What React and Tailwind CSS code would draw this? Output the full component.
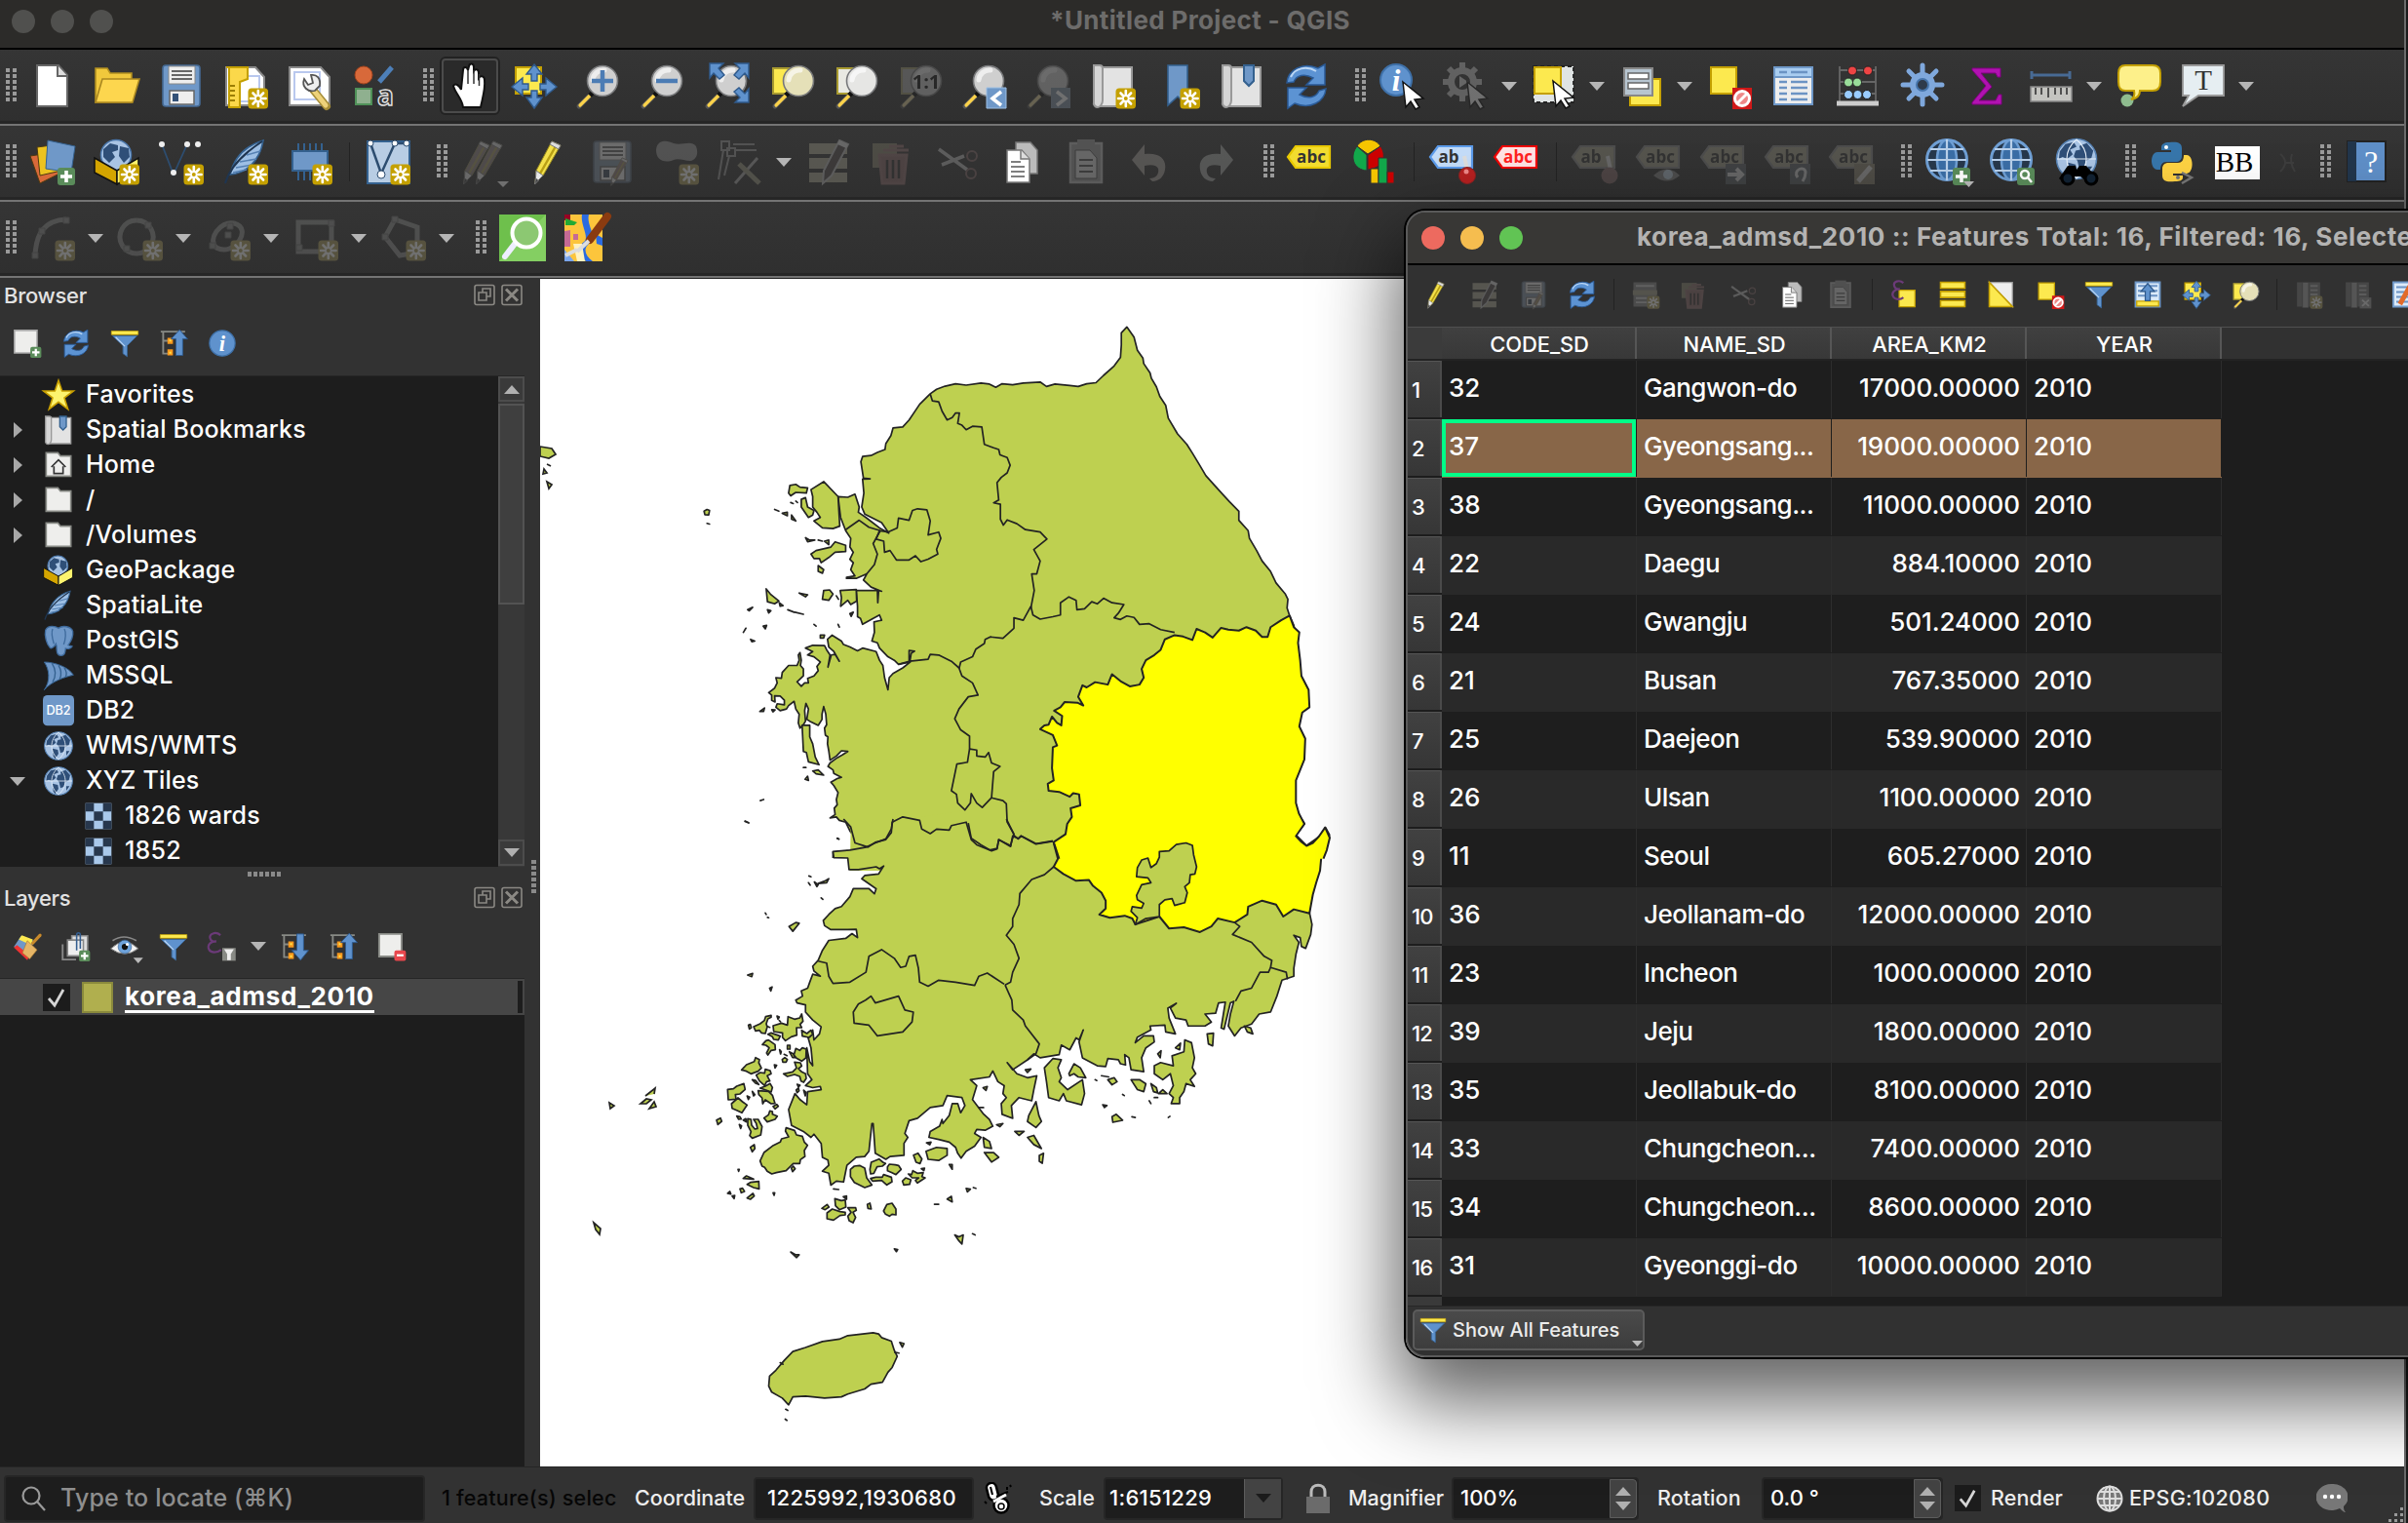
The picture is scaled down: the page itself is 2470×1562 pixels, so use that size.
import React from "react";

/* ---------- shared icon fragments (48 x 48 grid) ---------- */
const NewBadge = () => (
  <g>
    <rect x="26.500" y="26.500" width="20.500" height="21" rx="3.500" fill="#c4a000" />
    <path d="M36.800 29v16M29 37h15.600M31.500 31.500l10.600 11M42.100 31.500l-10.600 11" stroke="#fff" strokeWidth="2.600" strokeLinecap="round" />
    <circle cx="36.800" cy="37" r="2" fill="#c4a000" />
  </g>
);
const PlusBadge = () => (
  <g>
    <rect x="29" y="30" width="18" height="18" rx="3" fill="#5a8c5a" />
    <path d="M38 33v12M32 39h12" stroke="#fff" strokeWidth="3.600" />
  </g>
);
const Magnifier = ({ cx = 28, glass = "#cfcfcf" }) => (
  <g>
    <path d={`M${cx - 9} 30L${cx - 24} 45`} stroke="#555" strokeWidth="5" strokeLinecap="round" />
    <path d={`M${cx - 13} 34L${cx - 23} 44`} stroke="#fcd34a" strokeWidth="3.200" strokeLinecap="round" />
    <path d={`M${cx - 9} 30L${cx - 13} 34`} stroke="#111" strokeWidth="5" />
    <circle cx={cx} cy="19" r="15.500" fill={glass} stroke="#77787a" strokeWidth="1.600" />
    <path d={`M${cx - 10} 18a11 11 0 0 1 12-10`} stroke="#fff" strokeWidth="5" fill="none" opacity=".65" strokeLinecap="round" />
  </g>
);
const Cursor = ({ x = 0, y = 0 }) => (
  <path transform={`translate(${x} ${y})`} d="M23 20L44 37l-9 1 5 8-4 2-5-8-5 6z" fill="#fff" stroke="#111" strokeWidth="1.500" />
);
const Pencil = ({ x = 0, c = "#f3e04b" }) => (
  <g transform={`translate(${x} 0)`} stroke="#777" strokeWidth="1">
    <path d="M31 3l9 4L22 38l-8 8 1-13z" fill={c} stroke="#998a20" />
    <path d="M35 8L19 36" stroke="#b89f15" strokeWidth="2.500" />
    <path d="M31 3l9 4-2 4-9-5z" fill="#ddd" />
    <path d="M15 33l7 5-8 8z" fill="#e8e8e8" />
    <path d="M14.500 41l3 2-4 4z" fill="#444" />
  </g>
);
const Disk = () => (
  <g>
    <rect x="5" y="3" width="38" height="42" rx="3" fill="#6f98c8" stroke="#456a94" strokeWidth="1.600" />
    <path d="M11 4h27v18H11z" fill="#eee" stroke="#888" />
    <path d="M14 9h21M14 13h21M14 17h21" stroke="#666" strokeWidth="1.800" />
    <path d="M12 29h25v14H12z" fill="#eee" stroke="#666" strokeWidth="1.500" />
    <path d="M15 32h6v8h-6z" fill="#345278" />
  </g>
);
const ZoomSheet = ({ c }) => <path d="M5 6h20v26H5z" fill={c} stroke="#a89a30" strokeWidth="2" />;
const Trash = () => (
  <g>
    <path d="M3 5h25v25H3z" fill="#8f854f" />
    <path d="M14 12h26M20 8h15M10 17h28l-3 29H13z" fill="#b05c5c" stroke="#b86464" strokeWidth="3" />
    <path d="M18 22v19M24 22v19M30 22v19" stroke="#333" strokeWidth="2.500" />
  </g>
);
const Marble = ({ cx = 24, cy = 24, r = 22 }) => (
  <g transform={`translate(${cx} ${cy}) scale(${r / 22})`}>
    <circle r="21.500" fill="#a9c4e4" stroke="#5580b2" strokeWidth="1.600" />
    <path d="M-18-8l6-8 9-2 3 5-7 3 3 5-6 5-5-2-4 2zM-9 4l8 2 1 6-5 8-3-4zM3-14l8-3 7 8-2 8-6 3-2 7-5 2-2-9-4-5 2-6 5-1zM12 8l5 0-5 7z" fill="#2f4f78" />
    <path d="M-21 0h42M0-21c-14 12-14 30 0 42 14-12 14-30 0-42" stroke="#e8f1fb" strokeWidth="1.200" fill="none" />
  </g>
);
const NetGlobe = () => (
  <g fill="none" stroke="#6f9fd4">
    <circle cx="23" cy="22" r="20.500" fill="#27384c" strokeWidth="3" />
    <ellipse cx="23" cy="22" rx="10" ry="20.500" fill="#3b6ea6" strokeWidth="2.600" />
    <path d="M23 1v42M3 22h40M6 11h34M6 33h34" stroke="#b9d0ea" strokeWidth="2.200" />
  </g>
);
const Label = ({ fill, edge, text = "#333", x = 25, children = "abc" }) => (
  <g>
    <path d="M1 19L9 8h35v22H9z" fill={fill} stroke={edge} strokeWidth="2.200" />
    <text x={x} y="25" textAnchor="middle" fontSize="17" fontWeight="700" fill={text} className="font-['Open_Sans',sans-serif]">{children}</text>
  </g>
);
const Package = () => (
  <g>
    <circle cx="23" cy="17" r="15.500" fill="#a9c4e4" stroke="#4a76aa" strokeWidth="1.600" />
    <path d="M10 11l7-6 8 2 0 5-6 2 3 5-6 6-6-6zM27 8l9 2 1 9-6 6-5-7z" fill="#2f4f78" />
    <path d="M1 20l23 13v14L1 35z" fill="#d4a500" stroke="#111" strokeWidth="1.500" />
    <path d="M24 33l22-13v15L24 47z" fill="#fdf36e" stroke="#111" strokeWidth="1.500" />
  </g>
);
const Feather = () => (
  <g>
    <path d="M42 2C22 8 12 20 8 37c14-1 30-11 34-35z" fill="#9dbfe4" stroke="#34618f" strokeWidth="1.600" />
    <path d="M41 3C24 14 8 28 3 46" stroke="#1f3550" strokeWidth="2" fill="none" />
    <path d="M14 30l17-3M18 24l17-3M25 17l14-4M11 35l14-3" stroke="#5580b2" strokeWidth="1.600" />
  </g>
);
const GearShape = ({ c, hole, r = 12 }) => (
  <g>
    <circle cx="24" cy="23" r={r + 1} fill={c} />
    <path d="M24 3v40M4 23h40M10 9l28 28M38 9L10 37" stroke={c} strokeWidth="5" strokeLinecap="round" />
    <circle cx="24" cy="23" r={r - 6} fill={hole} stroke="#4674aa" strokeWidth="2" />
  </g>
);
const Star = () => <path d="M24 2l5.500 16H47L33 28.500 38.500 46 24 35 9.500 46 15 28.500 1 18h17.500z" fill="#fdf36e" stroke="#c9a000" strokeWidth="2.400" />;
const Folder = () => <path d="M5 5h18l4 5h16v31H5z" fill="#eeeeec" stroke="#888a85" strokeWidth="2.500" />;
const MapRoll = () => (
  <g>
    <path d="M10 5h33v40H10z" fill="#e3e3e3" stroke="#999" strokeWidth="2" />
    <path d="M4 3h6c3 0 3 3 3 3v33c0 4-3 7-5 7s-5-2-4-6z" fill="#d5d5d5" stroke="#999" strokeWidth="2" />
  </g>
);
const Tree = ({ up }) => (
  <g>
    <path d="M3 5h40M7 5v36h10M7 20h8" stroke="#888a85" strokeWidth="3" fill="none" />
    <path d="M14 15h9v10h-9zM14 34h9v10h-9z" fill="#f8981d" />
    <path d="M17 18h3v3h-3zM17 38h3v3h-3z" fill="#fce94f" />
    <path d={up ? "M34 2l13 15h-8v27H28V17h-8z" : "M34 46l13-16h-8V3H28v27h-8z"} fill="#5f92cd" stroke="#2f5a8c" strokeWidth="1.600" />
  </g>
);
const Node = ({ x, y }) => <path d={`M${x - 3} ${y - 3}h6v6h-6z`} fill="#8b8f8b" stroke="#6a6d6a" />;
const Shape = ({ d, nodes }) => (
  <g>
    <path d={d} fill="none" stroke="#8d908d" strokeWidth="5" />
    {nodes.map(([x, y], i) => <Node key={i} x={x} y={y} />)}
    <NewBadge />
  </g>
);

const ICONS = {
  newFile: <g><path d="M8 3h22l9 10v32H8z" fill="#fff" stroke="#666" strokeWidth="2" /><path d="M29 3v11h10" fill="#ddd" stroke="#666" strokeWidth="2" /></g>,
  open: <g><path d="M2 6h12l3 5h22v30H2z" fill="#f0c83c" stroke="#b08e20" strokeWidth="1.600" /><path d="M9 17h38l-7 24H2z" fill="#fdd64e" stroke="#a98720" strokeWidth="1.600" /></g>,
  save: <Disk />,
  newLayout: <g><path d="M4 5h30l9 10v29H4z" fill="#fff" stroke="#888" strokeWidth="2" /><path d="M16 14h22v26H16z" fill="none" stroke="#b9c8ee" strokeWidth="2" /><path d="M4 5h22v12l-8 3v26H7V5z" fill="#fbd84a" stroke="#c4a000" strokeWidth="2" /><path d="M8 24h5M8 29h5M8 34h5M8 39h5" stroke="#9c7e00" strokeWidth="2" /><NewBadge /></g>,
  layoutManager: <g><path d="M3 5h32l9 10v29H3z" fill="#fff" stroke="#888" strokeWidth="2" /><path d="M8 10h26v28H8z" fill="none" stroke="#b9c8ee" strokeWidth="2" /><path d="M27 28L41 45" stroke="#a68d38" strokeWidth="8" strokeLinecap="round" /><path d="M28 29L40 44" stroke="#eed27a" strokeWidth="5" strokeLinecap="round" /><path d="M18 17c-3 8 4 14 11 12l5-5c1-8-3-12-9-11l2 8-5 2z" fill="#eee" stroke="#555" strokeWidth="1.800" /></g>,
  style: <g><circle cx="13" cy="13" r="9" fill="#d8693a" stroke="#a4441d" /><path d="M42 5L29 20" stroke="#4d7fb8" strokeWidth="5" /><path d="M5 27h16v16H5z" fill="#8fb08f" stroke="#4f9158" strokeWidth="2" /><text x="27" y="44" fontSize="28" fontWeight="700" fill="#333" stroke="#ddd" strokeWidth="1.500" className="font-['Open_Sans',sans-serif]">a</text></g>,
  hand: <path d="M17 46c-1-9-8-14-10-22 2-3 6-1 8 4L17 8c0-4 4-4 5 0l1-4c1-4 5-3 5 1v4c2-3 5-2 5 2v5c2-3 6-2 6 2 1 10-2 18-4 28z" fill="#fff" stroke="#111" strokeWidth="2" />,
  handLines: <path d="M22 8v14M28 8v14M33.500 12v12" stroke="#333" strokeWidth="1.500" />,
  panSel: <g><path d="M5 5h26v27H5z" fill="#fce94f" stroke="#c4a000" strokeWidth="2" /><path d="M24 2l8 10h-5v7h-6v-7h-5zM24 47l8-11h-5v-7h-6v7h-5zM1 25l11-9v6h6v6h-6v6zM47 25l-11-9v6h-6v6h6v6z" fill="#5f92cd" stroke="#2f5a8c" strokeWidth="1.400" /></g>,
  zoomIn: <g><Magnifier /><path d="M28 8v22M17 19h22" stroke="#4c7cb4" strokeWidth="4.500" /></g>,
  zoomOut: <g><Magnifier /><path d="M17 19h22" stroke="#4c7cb4" strokeWidth="4.500" /></g>,
  zoomFull: <g><Magnifier /><path d="M6 1h14l-5 5 6 7-5 4-6-6-4 5zM46 1H32l5 5-6 7 5 4 6-6 4 5zM46 41H32l5-5-6-6 5-4 6 6 4-5z" fill="#5f92cd" stroke="#2f5a8c" strokeWidth="1.400" /></g>,
  zoomSel: <g><ZoomSheet c="#fce94f" /><Magnifier cx={31} glass="#e5e0b8" /></g>,
  zoomLayer: <g><ZoomSheet c="#e9e9e2" /><Magnifier cx={30} glass="#e6e6e4" /></g>,
  zoomNative: <g><ZoomSheet c="#aaa" /><Magnifier cx={30} glass="#ccc" /><text x="30" y="27" textAnchor="middle" fontSize="20" fontWeight="700" fill="#111" className="font-['Open_Sans',sans-serif]">1:1</text></g>,
  zoomLast: <g><Magnifier /><path d="M26 26h20v21H26z" fill="#6f98c8" stroke="#9dbfe4" /><path d="M41 30l-9 7 9 7" stroke="#fff" strokeWidth="3.500" fill="none" /></g>,
  zoomNext: <g><Magnifier /><path d="M26 26h20v21H26z" fill="#6f98c8" /><path d="M32 30l9 7-9 7" stroke="#fff" strokeWidth="3.500" fill="none" /></g>,
  newMap: <g><MapRoll /><NewBadge /></g>,
  newBookmark: <g><path d="M14 3h20v41l-10-9L14 44z" fill="#6f98c8" stroke="#34618f" strokeWidth="1.600" /><NewBadge /></g>,
  bookmarks: <g><MapRoll /><path d="M26 3h10v16l-5 5-5-5z" fill="#6f98c8" stroke="#34618f" strokeWidth="2" /></g>,
  refresh: <g fill="#5c93d3" stroke="#2a5a96" strokeWidth="1.500"><path d="M4 21C5 8 20-1 36 6l7-4v21H24l7-7c-9-5-17-3-20 4z" /><path d="M44 27C43 40 28 49 12 42l-7 5V26h19l-7 7c9 5 17 3 20-4z" /><path d="M8 15C12 6 24 3 34 9" stroke="#bcd7f5" strokeWidth="2" fill="none" /></g>,
  info: <g><circle cx="24" cy="24" r="21" fill="#5f92cd" stroke="#3e70a8" strokeWidth="2" /><text x="24" y="37" textAnchor="middle" fontSize="36" fontStyle="italic" fontWeight="700" fill="#fff" className="font-['Liberation_Serif',serif]">i</text></g>,
  identify: <g><circle cx="18" cy="18" r="16" fill="#5f92cd" stroke="#3e70a8" strokeWidth="2" /><text x="18" y="29" textAnchor="middle" fontSize="31" fontStyle="italic" fontWeight="700" fill="#fff" className="font-['Liberation_Serif',serif]">i</text><Cursor x={2} /></g>,
  action: <g><g transform="translate(-2 -3)" fill="none"><circle cx="22" cy="23" r="11.500" stroke="#ccc" strokeWidth="7" /><path d="M22 3v6M22 37v6M2 23h6M36 23h6M8 9l4 4M36 9l-4 4M8 37l4-4M36 37l-4-4" stroke="#ccc" strokeWidth="6" /></g><path d="M17 14l9 6-9 6z" fill="#ddd" /><Cursor x={2} /></g>,
  select: <g><path d="M3 4h41v37H3z" fill="#e0e4e4" stroke="#222" strokeDasharray="4 3" strokeWidth="1.800" /><path d="M4 5h27v27H4z" fill="#fce94f" stroke="#c4a000" strokeWidth="2" /><Cursor x={0} y={-1} /></g>,
  selectForm: <g><path d="M12 17h31v27H12z" fill="#fce94f" stroke="#c4a000" strokeWidth="2" /><path d="M6 6h29v28H6z" fill="#b7c5d0" stroke="#888" strokeWidth="2" /><path d="M10 11h21v6H10zM10 21h21v6H10z" fill="#fff" stroke="#666" strokeWidth="1.500" /></g>,
  deselect: <g><path d="M5 5h26v27H5z" fill="#fce94f" stroke="#c4a000" strokeWidth="2" /><path d="M27 26h20v22H27z" fill="#d01818" /><circle cx="37" cy="37" r="7.500" fill="#e88" stroke="#fff" strokeWidth="3" /><path d="M32 42l10-10" stroke="#fff" strokeWidth="3" /></g>,
  table: <g><path d="M4 5h39v38H4z" fill="#eee" stroke="#6f98c8" strokeWidth="2" /><path d="M4 5h39v10H4z" fill="#a9cdf0" stroke="#6f98c8" strokeWidth="2" /><path d="M9 10h8M21 10h17M9 20h8M21 20h17M9 26h8M21 26h17M9 32h8M21 32h17M9 38h8M21 38h17" stroke="#6b93c4" strokeWidth="2.400" /></g>,
  abacus: <g><path d="M5 4v38M42 4v38M5 8h37M5 20h37M5 32h37" stroke="#666" strokeWidth="1.800" /><g stroke="#222"><circle cx="18" cy="8.500" r="4.500" fill="#e44" /><circle cx="34" cy="8.500" r="4.500" fill="#e44" /><circle cx="14" cy="20.500" r="4.500" fill="#9d9" /><circle cx="23" cy="20.500" r="4.500" fill="#9d9" /><circle cx="14" cy="33" r="4.500" fill="#9cf" /><circle cx="23.500" cy="33" r="4.500" fill="#9cf" /><circle cx="33" cy="33" r="4.500" fill="#9cf" /></g><path d="M2 42h43" stroke="#ccc" strokeWidth="5" /></g>,
  gear: <GearShape c="#7fa8dc" hole="#2e3a4a" />,
  sigma: <path d="M9 6h29v9h-3l-2-4H18l11 14-13 14h17l3-6h3v10H9v-2l14-17L9 8z" fill="#b012b0" stroke="#800080" />,
  measure: <g><path d="M4 9v8M43 9v8M4 13h39" stroke="#486a94" strokeWidth="3" /><path d="M3 25h42v15H3z" fill="#c4c4c0" stroke="#888" strokeWidth="1.500" /><path d="M8 26v7M14 26v7M21 26v10M28 26v7M34 26v7M40 26v7" stroke="#444" strokeWidth="1.800" /></g>,
  tips: <g><circle cx="12" cy="39" r="6.500" fill="#8fbc8f" /><path d="M10 3h28q8 0 8 8v9q0 9-8 9H25c0 5-3 8-9 9 3-2 4-5 3-9h-9q-7 0-7-9v-9q0-8 7-8z" fill="#fdf08a" stroke="#c4a000" strokeWidth="2" /></g>,
  annotation: <g><path d="M3 3h42v31H19L3 45l6-11H3z" fill="#e6eef2" stroke="#999" strokeWidth="1.800" /><text x="24" y="28" textAnchor="middle" fontSize="29" fill="#333" className="font-['Liberation_Serif',serif]">T</text></g>,
  addLayer: <g stroke="#4d3a10" strokeWidth="1"><path d="M1 18l26-4 4 22L11 46z" fill="#d8693a" /><path d="M8 9l22-3 3 27-22 5z" fill="#edc320" /><path d="M19 2l28 6-4 27-26-4z" fill="#6f98c8" stroke="#34618f" /><g stroke="none"><PlusBadge /></g></g>,
  geopackage: <g><Package /><NewBadge /></g>,
  shapefile: <g><path d="M4 6l12 31L30 6" stroke="#2d4d70" strokeWidth="1.800" fill="none" /><circle cx="4" cy="6" r="3" fill="#eee" /><circle cx="30" cy="6" r="3" fill="#eee" /><circle cx="41" cy="6" r="3" fill="#eee" /><circle cx="16" cy="35" r="3" fill="#eee" /><NewBadge /></g>,
  feather: <Feather />,
  spatialite: <g><Feather /><NewBadge /></g>,
  memory: <g><path d="M12 5v38M18 5v38M24 5v38M30 5v38M36 5v38" stroke="#34618f" strokeWidth="2" /><path d="M6 13h36v20H6z" fill="#6f98c8" stroke="#34618f" strokeWidth="2" /><NewBadge /></g>,
  virtual: <g><path d="M3 3h43v43H3z" fill="#b8cde4" stroke="#34618f" strokeWidth="2" /><path d="M6 5l11 31L31 5M31 5h12" stroke="#2d4d70" strokeWidth="2.500" fill="none" /><circle cx="6" cy="5" r="3" fill="#fff" stroke="#2d4d70" /><circle cx="31" cy="5" r="3" fill="#fff" stroke="#2d4d70" /><circle cx="43" cy="5" r="3" fill="#fff" stroke="#2d4d70" /><circle cx="17" cy="37" r="4" fill="#fff" stroke="#2d4d70" /><NewBadge /></g>,
  edits: <g><Pencil x={-10} c="#a08080" /><Pencil x={3} c="#a08080" /><path d="M38 44h12l-6 6z" fill="#fff" /></g>,
  pencil: <Pencil x={-3} />,
  saveEdits: <g><Disk /><g transform="translate(14 18) scale(.65)"><Pencil c="#a77" /></g></g>,
  addFeature: <g><path d="M3 12c1-12 12-10 18-7 8 3 18-4 23 3 3 8 0 14-6 15-6 0-12-3-17-1-10 4-18 0-18-10z" fill="#999" /><NewBadge /></g>,
  vertex: <g stroke="#999" strokeWidth="3" fill="none"><path d="M4 3h8v9H4zM10 10h8v8h-8zM16 6h22M18 12h22M6 12L1 42M12 18L7 38" strokeWidth="2" /><path d="M41 20L18 46" stroke="#aaa" /><path d="M22 26l21 20" stroke="#a0985f" strokeWidth="5" /></g>,
  multiEdit: <g><path d="M4 5h39v11H4zM4 20h39v11H4zM4 35h39v10H4z" fill="#b3ab78" /><g transform="translate(2 0)"><path d="M33 2l9 4L25 38l-9 8 1-13z" fill="#5c4a4a" stroke="#bbb" strokeWidth="2" /><path d="M33 2l9 4-2 4-9-4z" fill="#ddd" /></g></g>,
  trash: <Trash />,
  cut: <g fill="none" strokeWidth="2"><path d="M5 11l29 21M8 27l23-9" stroke="#bbb" strokeWidth="3.500" /><circle cx="39" cy="18" r="5" stroke="#a06060" /><circle cx="38" cy="36" r="5" stroke="#a06060" /></g>,
  copy: <g stroke="#777" strokeWidth="1.500"><path d="M18 4h15l7 8v24H18z" fill="#bbb" /><path d="M9 12h15l8 9v24H9z" fill="#fff" /><path d="M23 12v9h9" fill="#ddd" /><path d="M13 24h10M13 29h14M13 34h14M13 39h14" stroke="#555" /></g>,
  paste: <g><path d="M8 5h32v40H8z" fill="#999" stroke="#bbb" strokeWidth="2.500" /><path d="M13 12h15l7 8v21H13z" fill="#ddd" stroke="#555" /><path d="M15 1h18v9H15z" fill="#999" /><path d="M17 22h14M17 28h14M17 34h14" stroke="#555" strokeWidth="2" /></g>,
  undo: <path d="M5 22L18 6v10c15-2 23 5 21 16-1 7-6 12-13 12l-3-3c8 0 10-6 9-10-1-3-6-5-14-3v10z" fill="#b0a094" />,
  redo: <path d="M43 22L30 6v10C15 14 7 21 9 32c1 7 6 12 13 12l3-3c-8 0-10-6-9-10 1-3 6-5 14-3v10z" fill="#a5aba5" />,
  label: <Label fill="#f2dc2f" edge="#e8c800" />,
  diagram: <g stroke="#333" strokeWidth="1"><path d="M17 16L6 8C11-1 25-1 30 8z" fill="#f6c500" /><path d="M16 17L6 8c-8 10-4 24 10 25z" fill="#12a84b" /><path d="M17 17L30 8c6 8 5 22-13 24z" fill="#c00" /><path d="M20 31h8v15h-8z" fill="#f6c500" /><path d="M28 20h9v26h-9z" fill="#12a84b" /><path d="M37 34h7v12h-7z" fill="#c00" /></g>,
  pinLabel: <g><Label fill="#c4dcf8" edge="#5c9bea" x={20}>ab</Label><path d="M36 18l3 14" stroke="#ddd" strokeWidth="4" /><circle cx="39" cy="38" r="8.500" fill="#b52020" stroke="#822" /><circle cx="38" cy="34" r="2.500" fill="#e88" /></g>,
  redLabel: <Label fill="#ffe3e3" edge="#e00" text="#f22" />,
  labPin: <g><Label fill="#aaa36a" edge="#888" x={20}>ab</Label><path d="M37 18l3 14" stroke="#ddd" strokeWidth="4" /><circle cx="39" cy="38" r="8.500" fill="#a66" /></g>,
  labEye: <g><Label fill="#aaa36a" edge="#888" /><path d="M18 38q14-13 27 0-13 11-27 0z" fill="#888" /><circle cx="33" cy="37" r="5" fill="#adf" /></g>,
  labMove: <g><Label fill="#aaa36a" edge="#888" /><path d="M26 26h21v21H26z" fill="#567" /><path d="M28 37h14M37 31l6 6-6 6" stroke="#ddd" strokeWidth="4" fill="none" /></g>,
  labRotate: <g><Label fill="#aaa36a" edge="#888" /><path d="M26 26h21v21H26z" fill="#567" /><path d="M34 40c-6-8 8-13 8-5 0 4-1 6-3 9" stroke="#ddd" strokeWidth="3" fill="none" /></g>,
  labEdit: <g><Label fill="#aaa36a" edge="#888" /><path d="M26 26h21v21H26z" fill="#985" /><path d="M43 29L30 44" stroke="#ddd" strokeWidth="5" /></g>,
  webAdd: <g><NetGlobe /><PlusBadge /><path d="M40 44h11l-5.500 6z" fill="#bbb" /></g>,
  webFind: <g><NetGlobe /><rect x="29" y="30" width="18" height="18" rx="3" fill="#5a8c5a" /><circle cx="37" cy="37" r="4" fill="none" stroke="#fff" strokeWidth="2.500" /><path d="M40 40l4 5" stroke="#fff" strokeWidth="2.500" /></g>,
  metaSearch: <g><Marble cx={24} cy={21} r={21} /><path d="M15 28h8l1 4 3-4h7l12 14-8 5-10-8h-7l-8 8-7-6z" fill="#000" /><circle cx="15" cy="41" r="6" fill="#123" stroke="#000" strokeWidth="3" /><circle cx="39" cy="41" r="6" fill="#123" stroke="#000" strokeWidth="3" /></g>,
  python: <g><path d="M21 4c8-1 13 0 13 6v8c0 4-3 6-6 6H18c-4 0-6 3-6 8H9C1 32 1 14 9 14h14v-2H13V9c0-3 3-5 8-5z" fill="#3776ab" /><path d="M27 44c-8 1-13 0-13-6v-7c0-4 3-6 6-6h10c4 0 6-3 6-8h3c7 0 8 18 0 19H25v2h10v2c0 3-3 4-8 4z" fill="#ffd343" /><circle cx="18" cy="9" r="2" fill="#fff" /><circle cx="30" cy="40" r="2" fill="#777" /><path d="M34 35l10 5-10 6" stroke="#777" strokeWidth="2.500" fill="none" /></g>,
  bb: <g transform="translate(1 0)"><path d="M1 8h46v34H1z" fill="#fff" /><text x="21" y="34" textAnchor="middle" fontSize="29" fill="#000" className="font-['Liberation_Serif',serif]">BB</text></g>,
  ghost: <path d="M18 16q10 8 0 18M22 25h10M30 16q-3 8 3 18" stroke="#3d3d3d" strokeWidth="2" fill="none" />,
  help: <g><path d="M4 3h39v41H4z" fill="#5f8fc8" stroke="#222" strokeWidth="2" /><path d="M4 3h9v41H4z" fill="#22364c" /><text x="28" y="35" textAnchor="middle" fontSize="32" fill="#fff" className="font-['Liberation_Serif',serif]">?</text></g>,
  arc: <Shape d="M6 42C7 20 15 6 38 5" nodes={[[6, 42], [13, 17], [38, 6]]} />,
  circle: <Shape d="M20 6a17 17 0 1 0 .1 0" nodes={[[32, 11], [10, 35]]} />,
  ellipse: <Shape d="M30 9C50 14 30 44 12 34 2 26 16 6 30 9" nodes={[[8, 32], [24, 21], [26, 12]]} />,
  rect: <Shape d="M6 8h34v30H6z" nodes={[[40, 9], [7, 34]]} />,
  poly: <Shape d="M15 5L38 13v26L20 42 5 23z" nodes={[[15, 5], [5, 23]]} />,
  quickSearch: <g><path d="M0 0h48v48H0z" fill="#6ec04c" /><path d="M0 48L48 0v48z" fill="#84cf62" /><path d="M16 30L6 43" stroke="#eef" strokeWidth="6" strokeLinecap="round" /><circle cx="28" cy="19" r="14.500" fill="#8cc872" stroke="#fff" strokeWidth="4" /></g>,
  paintMap: <g><path d="M1 0h39v48H1z" fill="#fcc53c" /><path d="M1 0h6v6H1z" fill="#902" /><path d="M2 4l12 4-3 3-9 0z" fill="#2a3" /><path d="M1 17l6-1v17H1zM10 20h5v6h-5z" fill="#c56a94" /><path d="M19 0h7c-3 12 10 22 0 30-6 5-4 12 4 18h-7c-8-7-9-15-2-20 6-5-4-17-2-28zM33 20l7 4v8l-6-2z" fill="#2b6be0" /><path d="M10 30h9l3 18H14z" fill="#fff2c0" /><path d="M1 36l10 12H1z" fill="#7aa6ee" /><path d="M45 2L27 26" stroke="#8a3b10" strokeWidth="8" strokeLinecap="round" /><path d="M26 27L14 38M14 36L2 42" stroke="#ddd" strokeWidth="4" /></g>,
  filter: <g><path d="M2 4h44v6H2z" fill="#fce94f" stroke="#c4a000" /><path d="M4 12h40L28 28v18l-7-5V28z" fill="#5f92cd" stroke="#3a6698" strokeWidth="1.500" /><path d="M9 14l15 15" stroke="#bcd7f5" strokeWidth="2" /></g>,
  addSheet: <g><path d="M3 3h37v37H3z" fill="#eeeeec" stroke="#aaa" strokeWidth="2.500" /><PlusBadge /></g>,
  delSheet: <g><path d="M3 3h37v37H3z" fill="#eeeeec" stroke="#888a85" strokeWidth="3" /><rect x="28" y="30" width="19" height="17" rx="3" fill="#e8474d" /><path d="M32 38h11" stroke="#fff" strokeWidth="3.500" /></g>,
  treeUp: <Tree up />, treeDown: <Tree />,
  star: <Star />, folder: <Folder />,
  home: <g><Folder /><path d="M13 27l11-11 11 11M17 26v11h14V26" fill="none" stroke="#333" strokeWidth="2.500" /></g>,
  package: <Package />,
  elephant: <g fill="#6f98c8" stroke="#3e6a9c" strokeWidth="2"><path d="M4 8C8-1 20 2 24 5c6-5 20-3 22 5 1 8-4 17-7 21l6 2c-2 4-8 4-10 3-1 8-2 11-7 11s-7-3-7-15l-1-3c-2 4-6 8-9 6C6 30 2 17 4 8z" /><path d="M15 6c-3 7 0 16 2 23M33 6c3 5 2 16-1 24" fill="none" /></g>,
  mssql: <g><path d="M2 3c16 0 38 8 45 20C34 26 14 32 2 46 12 32 10 14 2 3z" fill="#6f98c8" stroke="#34618f" strokeWidth="1.500" /><path d="M14 5c6 9 6 20 1 29M24 8c5 8 5 14 2 21M33 12c4 6 4 10 2 14" stroke="#34618f" strokeWidth="2" fill="none" /></g>,
  db2: <g><rect y="0" width="48" height="47" rx="7" fill="#6f98c8" /><text x="24" y="30" textAnchor="middle" fontSize="19" fill="#fff" className="font-['Inter',sans-serif]">DB2</text></g>,
  world: <Marble />,
  tile: <g><path d="M4 4h40v40H4z" fill="#a9c8ea" /><path d="M4 4h13v13H4zM31 4h13v13H31zM17 17h14v14H17zM4 31h13v13H4zM31 31h13v13H31z" fill="#27374d" /></g>,
  brush: <g><path d="M2 24L14 6l20 8-8 30z" fill="#6f98c8" /><path d="M10 12l5-7 18 7-3 9z" fill="#fce94f" /><path d="M2 25l5-4 21 17-4 8z" fill="#e33" /><path d="M45 5L33 18" stroke="#c98a2c" strokeWidth="5" strokeLinecap="round" /><path d="M24 14l16 15-12 15-12-10z" fill="#e6b566" stroke="#a9762a" /></g>,
  group: <g><path d="M2 20v25h22" fill="none" stroke="#888" strokeWidth="3" /><path d="M17 6h26v26H17z" fill="#ddd" stroke="#888" strokeWidth="2.500" /><path d="M10 13h26v26H10z" fill="#eee" stroke="#888" strokeWidth="2.500" /><path d="M25 30V5c0-5 6-5 6 0v22" fill="none" stroke="#345e90" strokeWidth="2.500" /><PlusBadge /></g>,
  eye: <g><path d="M4 14Q22 2 43 14" stroke="#888" strokeWidth="2.500" fill="none" /><path d="M1 27Q24 5 46 27 24 44 1 27z" fill="#f4f4f4" stroke="#777" strokeWidth="1.500" /><circle cx="24" cy="24" r="11" fill="#6ea3dc" stroke="#345e90" /><circle cx="24" cy="24" r="5" fill="#111" /><circle cx="28" cy="20" r="2.500" fill="#fff" /><path d="M38 42h16l-8 9z" fill="#bbb" /></g>,
  epsFilter: <g><path d="M21 5C13-2 2 3 4 10c1 5 6 6 10 5C5 15-1 21 2 28c3 7 14 6 20 1" fill="none" stroke="#6b3a78" strokeWidth="3.500" /><path d="M24 26h22v21H24z" fill="#888a85" /><path d="M27 28h16l-5 8v10h-6V36z" fill="#eee" /></g>,
  epsSel: <g><path d="M16 17h26v27H16z" fill="#fce94f" stroke="#c4a000" strokeWidth="2" /><path d="M23 5C16-1 6 3 8 10c1 4 5 6 9 5C9 15 3 21 6 27c3 6 12 6 17 2" fill="none" stroke="#6b3a78" strokeWidth="3.500" /></g>,
  selAll: <path d="M4 4h40v10H4zM4 19h40v10H4zM4 34h40v10H4z" fill="#fce94f" stroke="#c4a000" strokeWidth="2.500" />,
  invert: <g><path d="M4 4h38v40z" fill="#eee" stroke="#999" strokeWidth="2" /><path d="M4 4l38 40H4z" fill="#fce94f" stroke="#c4a000" strokeWidth="2.500" /></g>,
  moveTop: <g><path d="M4 4h40v40H4z" fill="#dcebfa" stroke="#6f98c8" strokeWidth="3" /><path d="M8 10h32M8 18h32M8 26h32" stroke="#6b93c4" strokeWidth="3" /><path d="M6 35h36v8H6z" fill="#fce94f" stroke="#c4a000" strokeWidth="2" /><path d="M24 6l11 13h-7v15h-8V19h-7z" fill="#5f92cd" stroke="#2f5a8c" strokeWidth="2" /></g>,
  addRow: <g><path d="M4 4h38v40H4z" fill="#888" /><path d="M8 10h30M8 30h18M8 37h18" stroke="#ccc" strokeWidth="3" /><path d="M3 17h40v8H3z" fill="#aaa36a" /><NewBadge /></g>,
  newField: <g><path d="M5 4h38v40H5z" fill="#777" /><path d="M14 4h10v42H14z" fill="#aaa" stroke="#444" /><path d="M27 10h12M27 17h12M27 24h12" stroke="#bbb" strokeWidth="3" /><NewBadge /></g>,
  delField: <g><path d="M5 4h38v40H5z" fill="#777" /><path d="M14 4h10v42H14z" fill="#aaa" stroke="#444" /><path d="M27 10h12M27 17h12M27 24h12" stroke="#bbb" strokeWidth="3" /><rect x="28" y="29" width="19" height="18" fill="#999" /><path d="M32 33l11 10M43 33L32 43" stroke="#eee" strokeWidth="3" /></g>,
  calc: <g><path d="M3 4h42v40H3z" fill="#dcebfa" stroke="#6f98c8" strokeWidth="3" /><path d="M8 12h32M8 20h32M8 28h32M8 36h32" stroke="#6b93c4" strokeWidth="3" /><path d="M34 4L14 40" stroke="#e26a2a" strokeWidth="8" /></g>,
};
ICONS.handFull = <g>{ICONS.hand}{ICONS.handLines}</g>;

const Icon = ({ n, s = 48, off }) => (
  <svg width={s} height={s} viewBox="0 0 48 48" className={off ? "shrink-0 overflow-visible opacity-30 grayscale-[60%]" : "shrink-0 overflow-visible"}>
    {ICONS[n]}
  </svg>
);

/* ---------- toolbar pieces ---------- */
const Handle = ({ first }) => (
  <div className={first ? "flex w-[21px] shrink-0 justify-end pr-[4px]" : "flex w-8 shrink-0 justify-end pr-[4px]"}>
    <svg width="11" height="36" viewBox="0 0 11 36" fill="#9a9a9a">
      {[0, 6, 12, 18, 24, 30].map((y) => <path key={y} d={`M0 ${y}h4v4h-4zM7 ${y}h4v4h-4z`} />)}
    </svg>
  </div>
);
const Drop = ({ w = "w-6 pr-[2px]" }) => (
  <div className={"flex shrink-0 justify-center " + w}>
    <svg width="16" height="9" viewBox="0 0 16 9"><path d="M0 0h16L8 9z" fill="#b5b5b5" /></svg>
  </div>
);
const Sep = () => <div className="flex w-[14px] shrink-0 justify-center"><div className="h-10 w-px bg-[#232323]" /></div>;

const Strip = ({ items }) =>
  items.map((it, i) => {
    if (it === "#") return <Handle key={i} first={i === 0} />;
    if (it === "v") return <Drop key={i} />;
    if (it === "|") return <Sep key={i} />;
    const off = it[0] === "-";
    const n = off ? it.slice(1) : it;
    const box = n === "handFull";
    return (
      <div key={i} className={n === "ghost" ? "flex w-[36px] shrink-0 items-center justify-center" : "flex w-[66px] shrink-0 items-center justify-center"}>
        <div className={box ? "flex h-[60px] w-[62px] items-center justify-center rounded-md border-2 border-[#222] bg-[#2a2a2a] outline-2 -outline-offset-4 outline-[#4b4b4b]" : "flex"}>
          <Icon n={n} off={off} />
        </div>
      </div>
    );
  });

const ROW1 = "# newFile open save newLayout layoutManager style # handFull panSel zoomIn zoomOut zoomFull zoomSel zoomLayer -zoomNative zoomLast -zoomNext newMap newBookmark bookmarks refresh # identify -action v select v selectForm v deselect table abacus gear sigma measure v tips annotation v".split(" ");
const ROW2 = "# addLayer geopackage shapefile spatialite memory | virtual # -edits pencil -saveEdits -addFeature -vertex v -multiEdit -trash -cut copy -paste -undo -redo # label diagram | pinLabel redLabel | -labPin -labEye -labMove -labRotate -labEdit # webAdd webFind metaSearch # python bb ghost # help".split(" ");
const ROW3 = "# -arc v -circle v -ellipse v -rect v -poly v # quickSearch paintMap".split(" ");

const Toolbar = ({ items }) => (
  <div className="flex h-[78px] items-center border-b-2 border-[#747474] bg-linear-to-b from-[#353535] to-[#2f2f2f] pb-[2px] shadow-[inset_0_-3px_0_#262626]">
    <Strip items={items} />
  </div>
);

/* ---------- docks ---------- */
const DockButtons = () => (
  <svg width="52" height="24" viewBox="0 0 52 24" fill="none" stroke="#8b8984" strokeWidth="1.600">
    <rect x="1" y="1.500" width="20" height="20" rx="2" /><path d="M5 9h8v8H5zM9 9V5h8v8h-4" />
    <rect x="29" y="1.500" width="20" height="20" rx="2" /><path d="M33 5.500l12 12M45 5.500l-12 12" strokeWidth="3" />
  </svg>
);
const DockTitle = ({ children }) => (
  <div className="flex h-9 items-center justify-between pr-0 pl-1">
    <span className="text-[22px] tracking-[-0.3px] text-[#e2e2e2]">{children}</span>
    <DockButtons />
  </div>
);
const TREE = [
  ["", "star", "Favorites"], [">", "bookmarks", "Spatial Bookmarks"], [">", "home", "Home"], [">", "folder", "/"], [">", "folder", "/Volumes"],
  ["", "package", "GeoPackage"], ["", "feather", "SpatiaLite"], ["", "elephant", "PostGIS"], ["", "mssql", "MSSQL"], ["", "db2", "DB2"],
  ["", "world", "WMS/WMTS"], ["v", "world", "XYZ Tiles"], ["c", "tile", "1826 wards"], ["c", "tile", "1852"],
];
const Tick = ({ s = 28 }) => (
  <svg width={s} height={s} viewBox="0 0 28 28"><path d="M0 0h28v28H0z" fill="#1c1c1c" /><path d="M6 15l6 7L21 6" fill="none" stroke="#d6d6d6" strokeWidth="2.800" /></svg>
);
const Tri = ({ dir, c = "#b0b0b0" }) => (
  <svg width="16" height="9" viewBox="0 0 16 9"><path d={dir === "up" ? "M0 9h16L8 0z" : "M0 0h16L8 9z"} fill={c} /></svg>
);

const Browser = () => (
  <section className="flex h-[604px] flex-col">
    <DockTitle>Browser</DockTitle>
    <div className="flex h-[64px] items-center gap-5 pb-[2px] pl-[13px]">
      {["addSheet", "refresh", "filter", "treeUp", "info"].map((n) => <Icon key={n} n={n} s={30} />)}
    </div>
    <div className="flex h-[504px] overflow-hidden border-t border-[#262626] bg-[#1d1d1d]">
      <div className="flex-1 pt-px">
        {TREE.map(([k, ic, t], i) => (
          <div key={i} className={k === "c" ? "flex h-9 items-center pl-[85px]" : "flex h-9 items-center pl-[10px]"}>
            {k !== "c" && (
              <span className="flex w-[34px] justify-start">
                {k === ">" && <svg width="9" height="16" viewBox="0 0 9 16" className="ml-1"><path d="M0 0v16l9-8z" fill="#a8a8a8" /></svg>}
                {k === "v" && <Tri />}
              </span>
            )}
            <Icon n={ic} s={32} />
            <span className={k === "c" ? "pl-[11px] text-[25px] tracking-[0.2px] text-white" : "pl-3 text-[25px] tracking-[0.2px] text-white"}>{t}</span>
          </div>
        ))}
      </div>
      <div className="flex w-[27px] flex-col bg-[#383838]">
        <div className="flex h-[26px] items-center justify-center border-2 border-[#4c4c4c] bg-[#3a3a3a]"><Tri dir="up" /></div>
        <div className="mt-[2px] h-[206px] border-2 border-[#535353] bg-[#3f3f3f]" />
        <div className="flex-1" />
        <div className="mb-px flex h-[27px] items-center justify-center border-2 border-[#4c4c4c] bg-[#3a3a3a]"><Tri /></div>
      </div>
    </div>
  </section>
);

const Layers = () => (
  <section className="flex flex-1 flex-col">
    <div className="flex h-[14px] items-center justify-center">
      <svg width="34" height="5" viewBox="0 0 34 5" fill="#8a8a8a" className="ml-1">{[0, 6, 12, 18, 24, 30].map((x) => <path key={x} d={`M${x} 0h4v5h-4z`} />)}</svg>
    </div>
    <DockTitle>Layers</DockTitle>
    <div className="flex h-[64px] items-center pb-px pl-[3px]">
      {["brush", "group", "eye", "filter", "epsFilter"].map((n) => <span key={n} className="flex w-[50px] justify-center"><Icon n={n} s={30} /></span>)}
      <Drop w="w-[24px]" />
      {["treeDown", "treeUp", "delSheet"].map((n) => <span key={n} className="flex w-[50px] justify-center"><Icon n={n} s={30} /></span>)}
    </div>
    <div className="flex-1 border-t border-[#262626] bg-[#1d1d1d]">
      <div className="flex h-[37px] items-center bg-[#464646] pl-11">
        <Tick />
        <div className="ml-[12px] size-8 border-2 border-[#8a8a3c] bg-[#b0af4e]" />
        <span className="mt-[2px] ml-[12px] border-b-3 border-white text-[26px] leading-[28px] font-bold tracking-[0.65px] text-white">korea_admsd_2010</span>
        <div className="mr-[2px] ml-auto h-[33px] w-[5px] bg-[#1d1d1d]" />
      </div>
    </div>
  </section>
);

/* ---------- map ---------- */
const GREEN = "#bed050";
const N_LAND = "310,1568 310,1551 370,1545 392,1537 365,1532 362,1510 350,1490 340,1465 325,1460 318,1450 303,1453 315,1443 313,1425 320,1415 318,1400 322,1380 312,1360 305,1350 320,1340 330,1336 312,1325 310,1315 298,1305 303,1295 320,1280 332,1272 345,1262 330,1260 318,1275 303,1287 300,1260 297,1240 298,1220 292,1215 290,1195 295,1185 293,1155 288,1133 284,1155 284,1170 275,1187 255,1175 248,1170 252,1140 246,1124 243,1145 245,1175 240,1185 232,1195 228,1180 230,1155 222,1140 218,1118 205,1130 200,1140 185,1145 175,1135 178,1125 195,1128 195,1115 185,1103 172,1102 173,1120 165,1115 165,1100 158,1093 172,1080 178,1065 175,1050 188,1052 190,1035 205,1015 225,1015 230,1000 228,985 232,978 235,1000 233,1015 240,1025 240,1045 225,1062 235,1075 243,1065 252,1065 250,1052 265,1045 275,1030 272,1018 280,1005 265,990 250,985 262,975 245,965 262,957 290,958 295,970 303,985 298,1020 306,985 315,983 325,1003 312,975 300,962 297,940 308,928 330,945 335,955 350,962 368,973 380,965 412,975 420,1000 428,1015 432,1050 440,1085 443,1050 452,1038 475,1022 493,1005 465,1012 455,1000 440,990 420,965 415,950 402,945 408,920 407,890 418,887 425,885 420,870 405,880 380,897 375,880 368,875 368,845 365,800 415,800 416,835 418,800 425,802 400,790 382,770 390,752 365,765 342,765 342,762 362,758 352,740 358,720 350,710 358,690 350,675 352,650 340,628 328,590 322,530 345,532 362,523 372,560 370,575 388,590 420,620 442,635 425,605 385,580 378,560 383,520 380,480 398,479 382,477 376,430 380,415 400,412 415,403 433,395 435,378 447,355 452,333 475,330 490,310 515,265 540,235 555,222 575,213 600,206 625,210 660,204 680,207 695,216 710,206 735,209 760,204 800,201 815,214 835,207 870,211 890,214 910,206 932,203 950,182 975,155 990,130 992,95 992,60 1005,43 1022,72 1030,110 1043,132 1045,148 1060,175 1063,190 1075,215 1083,242 1097,268 1103,305 1125,350 1147,380 1160,405 1175,435 1192,470 1220,508 1248,545 1270,572 1270,598 1292,628 1295,650 1312,685 1325,715 1345,745 1358,778 1380,810 1386,825 1384,850 1390,872 1400,900 1413,1000 1400,1300 1380,1568";
const N_SEL = "845,1570 832,1522 860,1500 864,1470 875,1450 872,1425 895,1417 892,1385 878,1382 870,1392 845,1378 820,1375 818,1355 832,1345 828,1310 830,1250 840,1245 830,1215 800,1198 810,1187 820,1185 828,1162 840,1180 850,1187 852,1160 833,1145 848,1135 858,1120 888,1122 902,1130 890,1105 900,1072 910,1078 930,1063 960,1070 970,1040 990,1060 1012,1075 1035,1070 1045,1050 1040,1025 1050,1000 1070,985 1085,970 1095,940 1118,928 1138,932 1160,942 1170,910 1190,920 1208,935 1228,907 1245,912 1270,915 1288,905 1310,915 1325,933 1338,933 1345,905 1370,885 1390,872 1400,905 1413,920 1410,950 1415,1000 1418,1045 1435,1085 1437,1135 1420,1150 1413,1190 1427,1225 1425,1285 1405,1345 1405,1410 1412,1440 1425,1470 1405,1505 1418,1522 1430,1533 1445,1525 1460,1505 1474,1480 1485,1510 1478,1545 1470,1570";
const N_LINES = [
  "540,235 545,255 560,258 568,285 580,310 592,303 600,290 609,290 605,320 615,325 625,338 640,328 662,330 668,380 690,390 702,395 705,410 722,418 729,440 722,462 708,475 698,490 702,540 690,548 706,552 706,595 713,612 722,597 745,608 765,625 800,632 816,652 785,682 800,715 792,752 780,752 786,800 778,850",
  "778,845 783,870 800,882 830,875 848,870 848,835 868,818 885,828 887,855 905,852 922,832 935,838 950,822 970,835 998,840 985,865 975,878 990,883 1005,873 1022,877 1035,897 1058,895 1085,912 1118,920",
  "778,845 760,885 738,878 738,908 712,937 682,933 670,940 668,952 648,968 640,990 612,1005 608,1025",
  "465,1012 490,1003 490,972 503,974 495,980 492,1003 535,997 540,983 560,985 590,1003 608,1022 615,1045 640,1065 653,1100 630,1105 608,1140 598,1168 612,1200 633,1218 633,1255",
  "633,1255 650,1258 650,1275 670,1278 678,1265 685,1295 705,1305 690,1320 685,1395 663,1423 650,1410 637,1383 635,1410 622,1430 605,1410 602,1385 590,1375 603,1298 628,1293 633,1255",
  "685,1395 712,1403 720,1412 722,1465 738,1500 735,1510",
  "392,1537 410,1523 435,1515 448,1495 450,1465 475,1450 515,1460 520,1485 540,1498 555,1485 585,1488 590,1475 625,1465 637,1515 650,1530 680,1545 698,1540 702,1515 730,1535 735,1505 748,1512 755,1505 790,1528 830,1520",
  "418,628 440,632 462,620 465,592 490,598 498,570 510,565 532,568 540,600 535,640 560,632 565,650 555,682 558,695 535,710 518,717 505,700 490,712 460,712 445,685 432,690 430,658 412,652 420,628",
  "340,625 372,598 395,618 422,628 405,665 415,695 408,725 390,752",
];
const N_ISLES = [
  "12,567 18,570 16,583 7,582 5,572", "205,520 208,498 222,495 232,503 250,505 247,520 222,518 210,528", "258,510 288,487 322,530 326,615 310,622 285,620 265,600 280,590 272,575 262,560 262,530",
  "235,538 245,533 250,560 265,570 262,583 252,590 235,560", "190,578 202,575 202,585", "212,583 222,600 212,595", "172,567 182,572", "210,547 216,550", "222,543 226,547", "245,648 255,655 267,655 250,660", "275,655 285,658", "290,658 300,655 300,668",
  "258,695 270,685 305,675 315,660 340,670 340,688 315,690 300,705 282,720 278,708 265,708", "275,728 288,740 285,750 275,745", "152,795 162,810 182,830 172,838 155,832", "183,835 192,843 185,845", "230,807 250,812 245,818",
  "285,825 288,800 302,798 310,810 300,828", "327,800 365,797 366,830 352,840 345,828 328,845 330,820", "203,855 218,862", "220,862 240,868", "155,855 163,858 158,864", "108,855 120,848 112,858", "98,920 104,908", "145,902 153,900 150,910", "115,940 125,945 118,947",
  "280,928 290,928 288,936 280,936", "265,897 270,902", "322,897 325,905", "350,866 358,862 353,874", "318,815 323,825", "137,1147 148,1137 146,1147", "165,1142 173,1143 168,1148",
  "237,1187 255,1187 255,1220 262,1240 268,1278 277,1300 252,1292 247,1265 240,1262", "262,1318 275,1315 288,1330 270,1326", "244,1342 250,1333 252,1345", "138,1403 146,1400", "102,1463 111,1467", "320,1512 324,1514", "12,607 18,609", "240,1308 246,1308",
];
const S_LAND = "335,0 352,20 362,60 392,70 350,78 310,82 312,97 345,98 348,127 370,127 412,120 420,125 430,118 418,138 385,142 378,150 412,175 408,188 395,175 358,175 350,195 330,220 315,225 300,240 287,255 290,268 305,278 345,278 365,277 368,298 355,288 340,300 300,305 285,330 275,355 262,370 265,382 280,395 262,390 255,410 250,425 235,432 238,445 222,455 225,462 245,467 245,485 262,505 282,522 278,540 265,555 262,530 250,545 258,575 262,620 255,610 250,585 248,575 250,640 260,655 245,670 262,675 280,672 282,680 250,685 248,718 232,705 220,690 205,730 212,770 240,785 258,800 265,792 282,815 285,850 298,857 300,870 285,885 300,890 305,920 318,910 335,912 343,870 365,850 385,848 395,835 402,765 405,765 410,840 435,855 445,848 478,845 478,815 487,800 480,790 490,758 510,752 540,725 570,720 580,695 615,700 622,720 612,738 605,715 592,715 585,745 570,765 568,755 562,772 540,785 537,800 560,805 585,812 600,825 605,840 613,852 625,835 645,822 660,800 645,790 650,780 670,782 688,772 680,755 665,740 640,705 650,670 635,655 680,648 688,633 700,660 715,670 712,690 720,700 708,715 710,742 735,752 732,720 750,700 780,708 785,680 792,645 770,650 745,640 722,612 735,630 770,605 785,590 800,600 845,592 850,568 870,580 885,550 892,555 902,530 892,560 900,600 935,620 955,622 960,602 985,605 990,615 1002,618 1000,592 1010,600 1015,630 1045,635 1040,600 1050,575 1070,560 1068,545 1045,545 1025,562 1030,548 1062,530 1060,520 1095,518 1097,535 1120,540 1105,500 1102,475 1122,463 1108,475 1120,500 1145,505 1150,520 1190,520 1205,510 1190,490 1215,488 1222,462 1238,460 1228,525 1235,528 1250,462 1258,458 1250,490 1245,520 1260,545 1275,525 1300,515 1318,490 1345,485 1360,445 1372,405 1400,395 1400,375 1405,340 1412,310 1400,292 1415,298 1418,320 1428,325 1440,290 1443,265 1437,235 1400,100 1380,0";
const S_SEL = "875,0 865,35 832,60 842,100 832,120 855,138 885,155 915,153 925,168 945,185 955,205 955,225 940,240 965,248 1000,243 1018,250 1025,265 1082,245 1105,275 1140,272 1178,284 1205,270 1220,250 1260,260 1290,240 1292,220 1325,205 1358,215 1375,245 1400,227 1437,237 1445,190 1453,160 1462,130 1465,95 1480,60 1484,40 1475,22 1460,45 1430,67 1405,40 1425,12 1418,0";
const DAEGU = "1025,265 1030,248 1015,232 1018,220 1040,224 1045,212 1030,203 1028,192 1040,165 1062,160 1055,148 1028,145 1030,122 1040,103 1055,98 1062,122 1075,112 1082,96 1082,82 1105,80 1122,64 1145,60 1160,66 1163,90 1170,120 1166,138 1155,140 1153,160 1142,170 1148,185 1142,210 1118,217 1112,200 1095,203 1082,215 1082,245 1050,250";
const S_LINES = [
  "390,70 410,60 435,50 448,25 452,0", "630,10 637,48 660,65 685,80 698,75 702,52 730,67 737,40 748,50 755,42 790,62 830,55", "720,0 738,38",
  "832,120 810,140 780,152 752,187 750,215 735,250 735,270 720,292 738,315 750,350 735,385 730,410 717,417",
  "275,357 295,362 300,395 310,413 350,410 388,385 395,345 425,328 455,350 470,373 482,370 490,345 505,342 512,375 515,410 535,420 560,405 600,410 645,418 655,395 675,387 715,415",
  "717,417 733,455 735,480 760,505 765,520 798,565 790,590 770,605",
  "387,455 400,445 410,462 465,445 480,480 500,485 497,510 475,535 415,545 395,518 360,513 358,485 370,465 387,455",
  "1260,260 1272,270 1255,290 1300,310 1330,345 1348,355 1345,373 1382,385 1385,403", "1345,373 1340,385 1320,385 1300,425 1275,432 1262,458",
];
const S_ISLES = [
  "158,1425 160,1400 175,1385 195,1360 215,1338 245,1328 285,1313 325,1307 345,1298 405,1291 418,1294 425,1303 448,1312 455,1335 462,1350 450,1378 440,1390 427,1415 400,1420 385,1432 345,1445 330,1452 290,1455 245,1450 215,1452 205,1472 190,1455 165,1440",
  "530,835 555,825 580,828 580,845 560,858 535,855", "665,800 680,810 685,828 668,825", "668,838 690,838 702,850 685,862", "585,868 592,868 592,880",
  "550,968 560,968", "580,955 590,948 592,962", "625,928 635,930 628,937", "642,926 648,928", "640,1042 646,1045", "598,1045 608,1060 615,1068 618,1045 608,1050", "455,1080 463,1082 460,1087", "210,1088 222,1095 230,1095 224,1102",
  "810,625 830,602 850,605 842,625 850,650 845,660 865,680 900,655 905,690 898,718 862,708 855,690 845,708 820,700 815,660", "868,640 880,615 895,625 908,650 890,648 880,640 870,645", "773,745 790,710 797,745 803,760 790,775 770,760", "770,800 785,795 803,828 785,818", "798,845 808,840 805,865 798,860", "740,785 762,785 750,795", "697,768 712,765 705,773", "655,725 666,725", "665,675 675,672 672,682", "765,630 778,628 770,637",
  "1070,620 1085,612 1115,620 1112,595 1140,585 1142,555 1158,562 1165,600 1160,625 1168,640 1155,655 1165,672 1145,665 1140,685 1130,700 1130,715 1110,715 1115,700 1105,690 1115,670 1108,640 1090,655 1070,640", "1015,655 1035,655 1050,665 1045,685 1030,680", "1062,665 1075,675 1078,688 1068,685", "1080,690 1100,690 1090,680", "1195,540 1210,538 1208,570 1198,565", "1283,520 1298,525 1303,540 1290,535", "1078,590 1086,582 1084,600", "1120,575 1132,563 1130,580",
  "948,718 958,720 952,725", "970,748 980,742 995,757 972,762", "1017,748 1025,750", "1103,750 1107,747", "960,655 975,650 982,660 970,668", "930,655 934,657", "995,692 999,695", "945,645 962,648", "1070,700 1078,700", "1058,708 1062,715", "468,1315 478,1318 474,1327", "456,1340 466,1342", "185,1366 192,1370", "198,1483 203,1486", "197,1508 201,1511",
  "206,270 222,260 230,262 215,282", "150,236 152,240", "155,247 158,248", "282,198 286,202", "253,143 258,145", "252,160 256,166", "266,158 275,165 272,170", "275,162 292,155 300,150 295,160", "108,392 120,388 118,396", "160,425 166,422 163,432", "320,48 324,50", "102,5 110,9",
];
const W_ISLES = [
  "114,69 134,60 147,50 151,38 168,34 168,40 158,45 153,60 156,70 150,90 138,88 132,80 120,82", "174,66 200,58 218,64 220,38 240,46 256,42 262,30 266,52 257,62 262,72 246,72 247,95 230,100 212,112 203,102 203,88 176,84", "262,80 278,90 290,80 296,92 285,102 264,98",
  "98,64 104,62 107,72 101,76", "186,36 193,39 189,46", "193,50 197,54", "157,68 164,71", "158,92 168,88 196,98 190,110 176,108 172,100", "141,124 152,112 160,110 180,124 181,140 168,142 158,156 154,150 162,134 152,126", "218,126 226,126 226,138 218,138", "194,140 199,146 197,153", "208,154 217,158", "202,170 210,164 218,170 214,178 204,178",
  "224,146 236,152 242,164 234,164", "244,136 256,142 264,134 276,138 275,165 262,175 246,166 238,156", "240,178 258,180 262,190 252,198 262,208 274,214 276,228 268,240 260,236 256,222 240,216 218,222 206,214 234,208 246,196", "178,186 185,188 180,196",
  "77,202 92,186 116,176 120,164 132,170 130,180 138,196 128,206 106,214 92,206", "122,218 134,210 148,212 150,200 165,204 168,214 156,220 164,236 154,238 148,250 132,236", "110,232 120,234 130,247 120,243", "134,258 150,252 165,244 172,256 168,270 152,264",
  "128,266 160,268 172,280 180,305 168,306 150,294 142,306 140,288 130,278", "34,262 52,260 62,252 84,244 88,262 72,276 58,278 60,292 36,294", "46,306 66,288 80,300 94,310 78,334 62,326 48,320", "94,282 102,286 98,293", "110,268 118,278 114,282", "248,246 257,249 252,255", "245,264 252,258 254,266 248,272", "268,264 276,272 273,282", "174,314 185,308 190,314 180,322",
  "146,350 160,340 164,328 172,330 172,338 187,344 180,354 156,362", "62,344 72,346 76,353 68,354", "82,356 90,352 92,362", "70,370 77,374 74,382", "96,352 106,354 108,372 118,384 126,382 122,366 114,354 128,354 140,376 136,402 110,412 102,404 106,392 96,372", "104,440 116,432 118,444 110,454",
  "0,356 12,350 16,360 4,370", "66,508 70,508 68,514", "82,536 92,528 114,538", "94,554 104,548 130,545 131,568 114,564", "34,582 41,576 44,584", "48,590 56,588 54,598", "72,568 80,566 86,576 76,580", "94,596 112,582 116,590 104,600", "174,580 179,580 177,588",
  "134,482 146,456 172,436 196,424 200,414 222,408 212,390 214,380 240,388 246,402 264,406 270,424 280,434 270,450 272,468 258,478 256,490 236,490 214,512 184,518 170,522 156,514 148,502 140,498", "230,504 236,498 242,506 234,515",
  "412,508 424,498 440,496 456,504 462,534 478,556 456,564 424,548 412,530", "472,508 476,486 500,476 512,486 520,490 510,498 494,500 484,520 474,522", "474,536 490,532 510,532 514,524 538,532 540,546 524,556 508,542 480,544", "526,500 532,492 550,494 560,496 568,508 552,524 540,518 526,512", "572,544 582,534 598,540 594,554 576,556", "606,464 620,458 632,476 626,490 614,486", "590,522 600,524 604,512 618,520 636,518 632,530 642,534 618,550 612,542 622,534 602,534", "630,506 640,504 638,512", "646,426 660,424 656,432",
  "324,628 340,616 346,624 334,632", "364,598 384,604 396,602 398,624 378,632 366,620", "390,592 400,590 400,600", "340,660 340,642 356,630 380,638 396,640 396,648 380,650 360,664", "404,626 428,626 430,634 420,640 428,656 420,672 408,666 404,652 414,640", "464,616 472,612 476,630 466,628", "514,636 524,616 540,612 552,630 552,648 540,646 532,652 520,646", "360,568 376,570",
];
const toPath = (s) => "M" + s.split(" ").join("L");
const Poly = ({ p, fill, close, w = 1.7 }) => (
  <path d={toPath(p) + (close ? "Z" : "")} fill={fill} stroke="#232323" strokeWidth={w} strokeLinejoin="round" vectorEffect="non-scaling-stroke" />
);
const MapCanvas = () => (
  <svg width="1913" height="1218" viewBox="0 0 1913 1218" className="block">
    <g transform="translate(166 34) scale(.43367 .35714)">
      <Poly p={N_LAND} fill={GREEN} />
      {N_ISLES.map((p, i) => <Poly key={i} p={p} fill={GREEN} close />)}
    </g>
    <g transform="translate(166 554) scale(.43367 .40816)">
      <path d="M352 20L870 -60L1380 0L1400 130L350 130z" fill={GREEN} />
      <Poly p={S_LAND} fill={GREEN} />
      {S_ISLES.map((p, i) => <Poly key={i} p={p} fill={GREEN} close />)}
      {S_LINES.map((p, i) => <Poly key={i} p={p} fill="none" />)}
      <Poly p={S_SEL} fill="#ffff00" w={2} />
    </g>
    <g transform="translate(181 744) scale(.33333)">
      {W_ISLES.map((p, i) => <Poly key={i} p={p} fill={GREEN} close />)}
    </g>
    <g transform="translate(166 34) scale(.43367 .35714)">
      <Poly p={N_SEL} fill="#ffff00" w={2} />
      {N_LINES.map((p, i) => <Poly key={i} p={p} fill="none" />)}
    </g>
    <g transform="translate(166 554) scale(.43367 .40816)">
      <Poly p={DAEGU} fill={GREEN} close />
    </g>
    <g fill={GREEN} stroke="#232323" strokeWidth="1.700">
      <path d="M0 172l12 2 4 6-7 4-9-2zM4 195l3 4-4 1zM7 208l5 3-3 4zM7 190l4 2" />
      <path d="M71 845l5 3-4 3zM103 846l6-5 5 1-5 4zM108 838l10-8-1 6M112 851l5-7 2 5zM55 968l7 6-1 6-4-5z" />
    </g>
  </svg>
);

/* ---------- attribute table window ---------- */
const ROWS = [
  ["32", "Gangwon-do", "17000.00000"], ["37", "Gyeongsang...", "19000.00000"], ["38", "Gyeongsang...", "11000.00000"], ["22", "Daegu", "884.10000"],
  ["24", "Gwangju", "501.24000"], ["21", "Busan", "767.35000"], ["25", "Daejeon", "539.90000"], ["26", "Ulsan", "1100.00000"],
  ["11", "Seoul", "605.27000"], ["36", "Jeollanam-do", "12000.00000"], ["23", "Incheon", "1000.00000"], ["39", "Jeju", "1800.00000"],
  ["35", "Jeollabuk-do", "8100.00000"], ["33", "Chungcheon...", "7400.00000"], ["34", "Chungcheon...", "8600.00000"], ["31", "Gyeonggi-do", "10000.00000"],
];
const TBL = "pencil -multiEdit -saveEdits refresh | -addRow -trash -cut copy -paste | epsSel selAll invert deselect filter moveTop panSel zoomSel | -newField -delField calc".split(" ");

const AttributeWindow = () => (
  <div className="absolute top-[216px] left-[1442px] h-[1176px] w-[1200px] overflow-hidden rounded-[20px] border-2 border-[#5a5a5a] bg-[#313131]">
    <div className="flex h-[54px] items-center border-b-2 border-black bg-[#383735] pl-[14px]">
      <div className="flex gap-4">
        <div className="size-6 rounded-full bg-[#ed6a5f]" />
        <div className="size-6 rounded-full bg-[#f5bd4f]" />
        <div className="size-6 rounded-full bg-[#61c454]" />
      </div>
      <span className="pb-[3px] pl-[117px] text-[26px] font-bold tracking-[0.6px] whitespace-nowrap text-[#b4b3b2]">korea_admsd_2010 :: Features Total: 16, Filtered: 16, Selected</span>
    </div>
    <div className="flex h-[63px] items-center pb-[3px] pl-[4px]">
      {TBL.map((it, i) => {
        if (it === "|") return <div key={i} className="flex w-[15px] shrink-0 justify-center"><div className="h-8 w-px bg-[#222]" /></div>;
        const off = it[0] === "-";
        return <span key={i} className="flex w-[50px] shrink-0 justify-center"><Icon n={off ? it.slice(1) : it} s={30} off={off} /></span>;
      })}
    </div>
    <div className="flex h-[35px] border-t border-b-2 border-t-[#505050] border-b-[#232323]">
      <div className="w-[35px] bg-[#3b3b3b]" />
      {["CODE_SD", "NAME_SD", "AREA_KM2", "YEAR"].map((h) => (
        <div key={h} className="flex w-[200px] items-center justify-center border-r-2 border-[#565656] bg-linear-to-b from-[#404040] to-[#383838] pt-[2px] pl-[2px] text-[22px] tracking-[-0.1px] text-white">{h}</div>
      ))}
    </div>
    <div className="h-[969px] bg-[#1d1d1d]">
      {ROWS.map((r, i) => {
        const sel = i === 1;
        const bg = sel ? "bg-[#886648]" : i % 2 ? "bg-[#292929]" : "bg-[#1e1e1e]";
        const cell = "flex h-[59px] w-[200px] items-center border-r pb-[4px] text-[26px] text-white " + (sel ? "border-[#1e1e1e] " : "border-[#2d2d2d] ");
        return (
          <div key={i} className="flex h-[60px]">
            <div className="flex h-[58px] w-[35px] items-center border-t border-r-2 border-t-[#555] border-r-[#4a4a4a] bg-linear-to-b from-[#414141] to-[#363636] pt-[2px] pl-1 text-[22px] tracking-[-0.8px] text-white">{i + 1}</div>
            <div className={"flex " + bg}>
              <div className={sel ? cell + "pl-[7px] shadow-[inset_0_0_0_4px_#00ff88]" : cell + "pl-[7px]"}>{r[0]}</div>
              <div className={cell + "pl-[7px] tracking-[-0.5px]"}>{r[1]}</div>
              <div className={cell + "justify-end pr-[6px] tracking-[-0.1px]"}>{r[2]}</div>
              <div className={cell + "pl-[7px] tracking-[-0.1px]"}>2010</div>
            </div>
          </div>
        );
      })}
      <div className="h-[9px] w-[35px] bg-[#3a3a3a]" />
    </div>
    <div className="flex h-[52px] items-start border-t border-[#262626] pt-[3px] pl-[5px]">
      <div className="flex h-[42px] w-[238px] items-center rounded-[5px] border-2 border-[#5b5b5b] bg-linear-to-b from-[#4a4a4a] to-[#3d3d3d] pl-[5px]">
        <Icon n="filter" s={28} />
        <span className="flex-1 pl-[6px] text-[20px] whitespace-nowrap text-[#ececec]">Show All Features</span>
        <svg width="11" height="6" viewBox="0 0 11 6" className="mb-[2px] self-end"><path d="M0 0h11L5.500 6z" fill="#bbb" /></svg>
      </div>
    </div>
  </div>
);

/* ---------- status bar ---------- */
const Field = ({ children, cls }) => <div className={"flex h-11 shrink-0 items-center rounded-[4px] border-2 border-[#262626] bg-[#1d1d1d] text-[22px] text-white " + cls}>{children}</div>;
const Spin = () => (
  <div className="ml-auto flex h-full w-[28px] flex-col items-center justify-around rounded-r border border-[#5c5c5c] bg-[#434343] py-1"><Tri dir="up" /><Tri /></div>
);
const StatusBar = () => (
  <div className="flex h-[58px] items-center border-t border-[#262626] bg-[#323232] pt-[6px] pl-[4px] text-[21.500px] whitespace-nowrap text-[#eee]">
    <div className="flex h-12 w-[432px] shrink-0 items-center rounded-[4px] border-2 border-[#262626] bg-[#1d1d1d] pl-4 text-[#8e8e8e]">
      <svg width="25" height="26" viewBox="0 0 25 26" fill="none" stroke="#9a9a9a" strokeWidth="2.200"><circle cx="10" cy="10" r="8.500" /><path d="M16 16l8 9" /></svg>
      <span className="pl-[15px] text-[25px] tracking-[0.15px]">Type to locate (⌘K)</span>
    </div>
    <span className="ml-[17px] w-[180px] shrink-0 overflow-hidden tracking-[0.2px] text-[#060606]">1 feature(s) selec</span>
    <span className="ml-[18px] w-[122px] shrink-0">Coordinate</span>
    <Field cls="w-[226px] pl-[12px] tracking-[0.35px]">1225992,1930680</Field>
    <svg width="30" height="34" viewBox="0 0 30 34" className="ml-[10px] shrink-0"><rect x="4" y="1" width="10" height="18" rx="5" transform="rotate(-14 8 10)" fill="#fff" stroke="#000" strokeWidth="2.500" /><path d="M7 5l2 8" stroke="#000" strokeWidth="2" /><path d="M13 15l12-5M24 5v3M27 3l1 2M1 20l2 2" stroke="#000" strokeWidth="2" /><circle cx="18" cy="24" r="7.500" fill="#fff" stroke="#000" strokeWidth="2.500" /><path d="M10 20l13-7" stroke="#fff" strokeWidth="3" /><circle cx="18" cy="25" r="3" fill="#fff" stroke="#000" strokeWidth="1.500" /></svg>
    <span className="ml-[27px] w-[66px] shrink-0">Scale</span>
    <Field cls="w-[184px] pl-[4px] border-[#4a4a4a] tracking-[0.3px]">1:6151229<div className="ml-auto flex h-full w-[38px] items-center justify-center border-l border-[#5c5c5c] bg-[#434343]"><Tri c="#1b1b1b" /></div></Field>
    <svg width="24" height="32" viewBox="0 0 24 32" className="ml-[24px] shrink-0"><path d="M5 15V9c0-9 14-9 14 0v6" fill="none" stroke="#bbb" strokeWidth="3" /><path d="M0 14h24v17H0z" fill="#6b6b6b" /></svg>
    <span className="ml-[19px] w-[106px] shrink-0">Magnifier</span>
    <Field cls="w-[192px] pl-[7px]">100%<Spin /></Field>
    <span className="ml-[19px] w-[107px] shrink-0 tracking-[0.1px]">Rotation</span>
    <Field cls="w-[186px] pl-[7px]">0.0 °<Spin /></Field>
    <div className="ml-[12px] flex shrink-0"><Tick s={27} /></div>
    <span className="ml-[10px] w-[107px] shrink-0 tracking-[0.1px]">Render</span>
    <svg width="30" height="28" viewBox="0 0 30 28" className="shrink-0" fill="none" stroke="#ddd" strokeWidth="2"><circle cx="15" cy="14" r="12.500" fill="#777" /><ellipse cx="15" cy="14" rx="6" ry="12.500" /><path d="M15 1v26M2 14h26M5 7h20M5 21h20" /></svg>
    <span className="ml-[5px] w-[192px] shrink-0 tracking-[0.35px]">EPSG:102080</span>
    <svg width="32" height="30" viewBox="0 0 32 30" className="shrink-0"><path d="M16 0a16 13.500 0 1 0 8 25c2 2 4 4 6 4-2-2-2-4-2-6A16 13.500 0 0 0 16 0z" fill="#777" /><circle cx="9" cy="13" r="2.200" fill="#fff" /><circle cx="16" cy="13" r="2.200" fill="#fff" /><circle cx="23" cy="13" r="2.200" fill="#fff" /></svg>
    <svg width="22" height="20" viewBox="0 0 22 20" className="mt-auto ml-auto" fill="#999"><path d="M2 16h3v3H2zM8 16h3v3H8zM14 16h3v3h-3zM8 10h3v3H8zM14 10h3v3h-3zM14 4h3v3h-3zM19 0h3v3h-3z" /></svg>
  </div>
);

export default function App() {
  return (
    <div className="relative flex h-[1562px] w-[2470px] flex-col overflow-hidden bg-[#323232] font-['Inter',sans-serif] font-medium">
      <div className="relative flex h-[51px] shrink-0 items-center justify-center border-b-2 border-black bg-[#2c2b29] pr-[8px] pb-[8px]">
        <div className="absolute top-[10px] left-3 flex gap-4">
          <div className="size-6 rounded-full bg-[#50504e]" />
          <div className="size-6 rounded-full bg-[#50504e]" />
          <div className="size-6 rounded-full bg-[#50504e]" />
        </div>
        <span className="text-[26px] leading-8 font-bold tracking-[0.35px] text-[#6d6c6b]">*Untitled Project - QGIS</span>
      </div>
      <Toolbar items={ROW1} />
      <Toolbar items={ROW2} />
      <Toolbar items={ROW3} />
      <div className="flex h-[1219px] shrink-0">
        <aside className="flex w-[538px] flex-col"><Browser /><Layers /></aside>
        <div className="flex w-4 items-center justify-center">
          <svg width="5" height="36" viewBox="0 0 5 36" fill="#8a8a8a" className="mt-[11px] ml-[3px]">{[0, 6, 12, 18, 24, 30].map((y) => <path key={y} d={`M0 ${y}h5v4H0z`} />)}</svg>
        </div>
        <main className="h-[1219px] flex-1 overflow-hidden border-t border-[#222] bg-white"><MapCanvas /></main>
      </div>
      <StatusBar />
      <div className="absolute top-0 right-0 h-[1562px] w-[4px] border-l-2 border-[#6a6a6a] bg-[#1a1a1a]" />
      <div className="absolute top-[216px] left-[1442px] h-[1176px] w-[1200px] rounded-[20px] shadow-[0_0_0_2px_#000,0_36px_80px_10px_rgba(0,0,0,0.62)]" />
      <AttributeWindow />
    </div>
  );
}
